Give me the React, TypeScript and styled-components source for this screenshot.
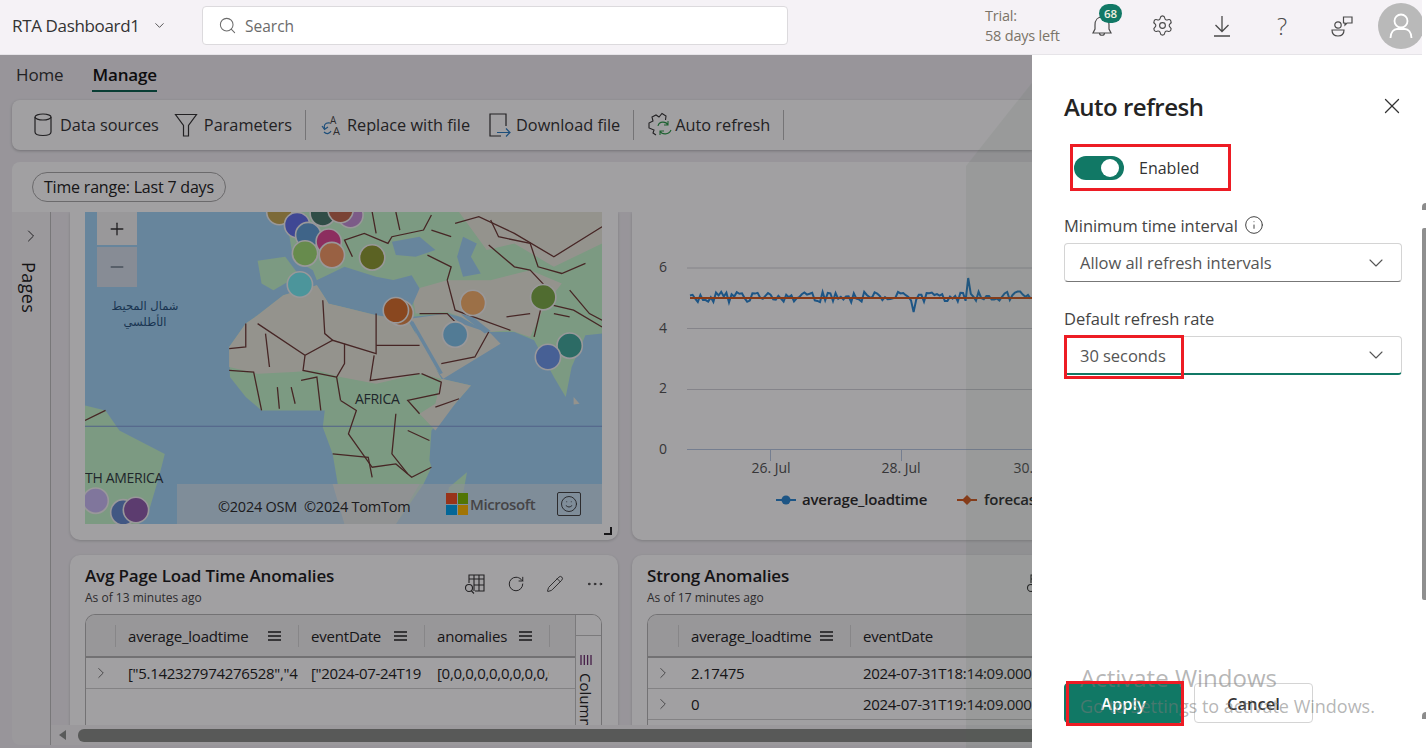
import React from 'react';
import styled, { createGlobalStyle } from 'styled-components';
import { ChevronDown, ChevronRight, Info, Minus, MoreHorizontal, Pencil, Plus, RotateCw, Search, Settings, Smile, X } from 'lucide-react';

const GlobalStyle = createGlobalStyle`
  html, body {
    margin: 0;
    padding: 0;
    background: #fff;
    overflow: hidden;
    font-family: "Open Sans", "Noto Sans", sans-serif;
    color: #242424;
  }
  * { box-sizing: border-box; }
`;

const Screen = styled.div`
  position: relative;
  width: 1426px;
  height: 748px;
  display: flex;
  overflow: hidden;
  background: #fff;
`;

const Window = styled.div`
  width: 1422px;
  height: 748px;
  display: flex;
  flex-direction: column;
`;

const PageScrollbar = styled.div`
  width: 4px;
  display: flex;
  flex-direction: column;
  align-items: stretch;
  padding-top: 203px;
`;

const ScrollArrow = styled.div`
  height: 7px;
  background: #8c8c8c;
  border-radius: 4px 0 0 0;
`;

const ScrollThumb = styled.div`
  height: 372px;
  margin: 18px 0 112px;
  background: #8f8f8f;
  border-radius: 2px 0 0 2px;
`;

const TopBar = styled.header`
  height: 55px;
  flex: none;
  display: flex;
  align-items: center;
  overflow: hidden;
  background: #f5f2f6;
  border-bottom: 1px solid #e6e4e8;
  padding: 0 0 3px 12px;
`;

const AppName = styled.div`
  flex: none;
  display: flex;
  align-items: center;
  width: 190px;
  gap: 12px;
  font-size: 17px;
  letter-spacing: -0.35px;
  color: #333;
`;

const SearchBox = styled.div`
  flex: none;
  width: 586px;
  height: 39px;
  display: flex;
  align-items: center;
  gap: 8px;
  padding-left: 15px;
  background: #fff;
  border: 1px solid #dcdadd;
  border-radius: 4px;
  font-size: 15.5px;
  color: #6b6b6b;
`;

const Trial = styled.div`
  flex: none;
  margin-left: 197px;
  width: 87px;
  font-size: 14.5px;
  line-height: 20px;
  letter-spacing: -0.2px;
  color: #7b7468;
  white-space: nowrap;
`;

const TopIcons = styled.div`
  flex: none;
  display: flex;
  align-items: center;
`;

const TopIcon = styled.div`
  position: relative;
  width: 60px;
  height: 40px;
  display: flex;
  align-items: center;
  justify-content: center;
  color: #4a4a4a;
  font-size: 24px;
  font-weight: 300;
`;

const Badge = styled.span`
  position: absolute;
  top: -2px;
  left: 27px;
  width: 23px;
  height: 19px;
  border-radius: 10px;
  background: #117865;
  color: #f0f0e0;
  font-size: 11.5px;
  font-weight: 600;
  line-height: 19px;
  text-align: center;
`;

const Avatar = styled.div`
  width: 46px;
  height: 46px;
  flex: none;
  margin-left: 6px;
  border-radius: 50%;
  background: #b9b9b9;
  display: flex;
  align-items: center;
  justify-content: center;
  color: #fff;
`;

const Main = styled.div`
  flex: 1;
  min-height: 0;
  display: flex;
`;

const Workspace = styled.div`
  position: relative;
  width: 1032px;
  display: flex;
  flex-direction: column;
  overflow: hidden;
  background: #f0eef2;
`;

const Scrim = styled.div`
  position: absolute;
  inset: 0;
  background: rgba(8, 6, 10, 0.38);
`;

const Band = styled.div`
  position: absolute;
  top: 0;
  right: 0;
  bottom: 0;
  width: 66px;
  background: rgba(130, 170, 130, 0.1);
  clip-path: polygon(100% 4%, 100% 100%, 0 100%, 0 16%);
`;

const Tabs = styled.nav`
  height: 45px;
  flex: none;
  display: flex;
  gap: 29px;
  padding-left: 16px;
`;

const Tab = styled.div<{ $active?: boolean }>`
  height: 37px;
  display: flex;
  align-items: center;
  padding-top: 4px;
  font-size: 17px;
  letter-spacing: -0.15px;
  font-weight: ${p => (p.$active ? 600 : 400)};
  color: ${p => (p.$active ? '#111' : '#333')};
  border-bottom: ${p => (p.$active ? '2px solid #0b5f4e' : '2px solid transparent')};
`;

const Toolbar = styled.div`
  height: 50px;
  flex: none;
  margin-left: 12px;
  display: flex;
  align-items: center;
  padding-left: 21px;
  background: #fff;
  border-radius: 8px 0 0 8px;
  box-shadow: 0 1px 3px rgba(0, 0, 0, 0.25);
`;

const ToolButton = styled.div<{ $gap?: number; $end?: number }>`
  flex: none;
  display: flex;
  align-items: center;
  gap: ${p => p.$gap ?? 7}px;
  margin-right: ${p => p.$end ?? 15}px;
  font-size: 16.3px;
  color: #333;
  white-space: nowrap;
`;

const ToolDivider = styled.div`
  flex: none;
  width: 1px;
  height: 30px;
  margin-right: 13px;
  background: #b8b8b8;
`;

const FilterBar = styled.div`
  height: 50px;
  flex: none;
  margin: 12px 0 0 12px;
  display: flex;
  align-items: center;
  padding-left: 20px;
  background: #fff;
  border-radius: 8px 0 0 0;
`;

const Pill = styled.div`
  height: 30px;
  padding: 0 11px;
  display: flex;
  align-items: center;
  border: 1px solid #a8a8a8;
  border-radius: 15px;
  font-size: 16px;
  letter-spacing: -0.2px;
  color: #222;
`;

const Body = styled.div`
  flex: 1;
  min-height: 0;
  display: flex;
  margin: 0 0 3px 12px;
`;

const PagesPane = styled.aside`
  width: 39px;
  flex: none;
  display: flex;
  flex-direction: column;
  align-items: center;
  padding-top: 14px;
  gap: 16px;
  background: #f5f4f6;
  border-right: 1px solid #bdbdbd;
  border-radius: 0 0 0 8px;
  color: #333;
`;

const PagesLabel = styled.div`
  writing-mode: vertical-rl;
  font-size: 18px;
  font-weight: 500;
  letter-spacing: 0.4px;
  color: #1c1c1c;
  margin-left: -4px;
`;

const ScrollColumn = styled.div`
  flex: 1;
  min-width: 0;
  display: flex;
  flex-direction: column;
`;

const Scroller = styled.div`
  flex: 1;
  min-height: 0;
  overflow: hidden;
  padding-left: 19px;
`;

const CardGrid = styled.div`
  display: grid;
  grid-template-columns: 548px 548px;
  grid-template-rows: 328px 220px;
  column-gap: 14px;
  row-gap: 15px;
`;

const Card = styled.section`
  position: relative;
  background: #fff;
  border-radius: 0 0 10px 10px;
  box-shadow: 0 1px 3px rgba(0, 0, 0, 0.18);
`;

const TableCard = styled(Card)`
  border-radius: 10px;
  padding: 11px 15px 0;
`;

const MapFrame = styled.div`
  position: relative;
  width: 517px;
  height: 312px;
  margin-left: 15px;
  overflow: hidden;
`;

const ZoomControl = styled.div`
  position: absolute;
  top: 0;
  left: 12px;
  width: 40px;
  display: flex;
  flex-direction: column;
  gap: 2px;
`;

const ZoomButton = styled.div<{ $off?: boolean }>`
  height: ${p => (p.$off ? 40 : 33)}px;
  display: flex;
  align-items: center;
  justify-content: center;
  background: ${p => (p.$off ? '#d5dfeb' : '#f2f2f2')};
  color: ${p => (p.$off ? '#6f7f8c' : '#333')};
`;

const Attribution = styled.div`
  position: absolute;
  left: 92px;
  right: 0;
  bottom: 0;
  height: 40px;
  display: flex;
  align-items: center;
  padding-left: 41px;
  background: rgba(225, 232, 238, 0.62);
  color: #2b2b2b;
  font-size: 14.5px;
  letter-spacing: -0.25px;
`;

const Copyright = styled.span`
  width: 228px;
  padding-top: 4px;
  white-space: nowrap;
`;

const MsLogo = styled.div`
  width: 22px;
  height: 22px;
  display: grid;
  grid-template-columns: 1fr 1fr;
  gap: 1px;
  margin-right: 2px;
`;

const MsSquare = styled.i<{ $color: string }>`
  display: block;
  background: ${p => p.$color};
`;

const MsName = styled.span`
  font-size: 15px;
  font-weight: 600;
  color: #6c6c6c;
  letter-spacing: -0.4px;
`;

const FeedbackBox = styled.div`
  width: 24px;
  height: 24px;
  margin-left: 22px;
  display: flex;
  align-items: center;
  justify-content: center;
  border: 1px solid #444;
  border-radius: 2px;
  color: #333;
`;

const ResizeCorner = styled.div`
  position: absolute;
  right: 6px;
  bottom: 5px;
  width: 8px;
  height: 8px;
  border-right: 2px solid #222;
  border-bottom: 2px solid #222;
`;

const CardHeader = styled.div`
  display: flex;
  justify-content: space-between;
  height: 48px;
`;

const CardTitle = styled.h3`
  margin: 0;
  font-size: 17px;
  line-height: 20px;
  font-weight: 600;
  letter-spacing: -0.15px;
  color: #1c1c1c;
  white-space: nowrap;
`;

const CardSubtitle = styled.div`
  margin-top: 3px;
  font-size: 12px;
  color: #444;
`;

const CardActions = styled.div`
  display: flex;
  align-items: center;
  gap: 21px;
  height: 28px;
  margin: 4px -2px 0 0;
  color: #333;
`;

const Table = styled.div`
  position: relative;
  width: 517px;
  height: 140px;
  overflow: hidden;
  border: 1px solid #b5b5b5;
  border-bottom: none;
  border-radius: 10px 10px 0 0;
`;

const HeadRow = styled.div<{ $cols: string }>`
  display: grid;
  grid-template-columns: ${p => p.$cols};
  height: 43px;
  align-items: center;
  background: #f1f1f1;
  border-bottom: 2px solid #b4b4b4;
`;

const HeadCell = styled.div`
  min-width: 0;
  display: flex;
  align-items: center;
  justify-content: space-between;
  height: 22px;
  padding: 0 17px 0 12px;
  border-left: 1px solid #d6d6d6;
  font-size: 15px;
  font-weight: 500;
  letter-spacing: -0.2px;
  color: #222;
  overflow: hidden;
  white-space: nowrap;
`;

const BodyRow = styled.div<{ $cols: string }>`
  display: grid;
  grid-template-columns: ${p => p.$cols};
  height: 31px;
  align-items: center;
  border-bottom: 1px solid #cfcfcf;
  color: #222;
`;

const BodyCell = styled.div`
  min-width: 0;
  padding-left: 13px;
  font-size: 15px;
  letter-spacing: -0.3px;
  overflow: hidden;
  white-space: nowrap;
`;

const Expander = styled.div`
  display: flex;
  justify-content: center;
  color: #555;
`;

const ColumnsRail = styled.div`
  position: absolute;
  top: 0;
  right: 0;
  bottom: 0;
  width: 26px;
  background: #fff;
  border-left: 1px solid #c2c2c2;
`;

const RailTop = styled.div`
  height: 21px;
  border-bottom: 1px solid #c2c2c2;
`;

const RailLabel = styled.div`
  display: flex;
  flex-direction: row;
  align-items: center;
  gap: 7px;
  padding: 18px 3px 0 0;
  writing-mode: vertical-rl;
  font-size: 15px;
  font-weight: 500;
  color: #222;
`;

const HScrollbar = styled.div`
  height: 20px;
  flex: none;
  display: flex;
  align-items: center;
  padding-left: 8px;
  gap: 12px;
  background: #f5f4f6;
`;

const LeftArrow = styled.div`
  width: 0;
  height: 0;
  border-top: 5px solid transparent;
  border-bottom: 5px solid transparent;
  border-right: 7px solid #8c8f8c;
`;

const HThumb = styled.div`
  flex: 1;
  height: 13px;
  background: #8a8d88;
  border-radius: 6px 0 0 6px;
`;

const Panel = styled.aside`
  width: 390px;
  flex: none;
  display: flex;
  flex-direction: column;
  padding: 0 20px 25px 32px;
  background: #fff;
`;

const PanelHeader = styled.div`
  display: flex;
  align-items: center;
  justify-content: space-between;
  height: 30px;
  margin: 36px -3px 0 0;
  color: #333;
`;

const PanelTitle = styled.h2`
  margin: 0;
  font-size: 24px;
  font-weight: 600;
  letter-spacing: -0.5px;
  color: #242424;
`;

const ToggleRow = styled.div`
  display: flex;
  align-items: center;
  gap: 15px;
  margin: 35px 0 0 10px;
  font-size: 16px;
  color: #333;
`;

const Toggle = styled.div`
  width: 50px;
  height: 24px;
  display: flex;
  justify-content: flex-end;
  align-items: center;
  padding-right: 5px;
  background: #117865;
  border-radius: 12px;
`;

const Knob = styled.div`
  width: 18px;
  height: 18px;
  border-radius: 50%;
  background: #fff;
`;

const FieldLabel = styled.label<{ $top: number }>`
  display: flex;
  align-items: center;
  gap: 6px;
  height: 20px;
  margin-top: ${p => p.$top}px;
  font-size: 16.5px;
  letter-spacing: -0.05px;
  color: #444;
`;

const Select = styled.div<{ $focused?: boolean }>`
  height: 39px;
  margin-top: 8px;
  display: flex;
  align-items: center;
  justify-content: space-between;
  padding: 0 13px 0 15px;
  border: 1px solid #d4d4d4;
  border-bottom: ${p => (p.$focused ? '2px solid #117865' : '1.5px solid #777')};
  border-radius: 4px;
  font-size: 16.5px;
  letter-spacing: -0.05px;
  color: #555;
`;

const PanelFooter = styled.div`
  margin-top: auto;
  display: flex;
  gap: 11px;
`;

const Button = styled.div<{ $primary?: boolean }>`
  width: 119px;
  height: 40px;
  display: flex;
  align-items: center;
  justify-content: center;
  border-radius: 4px;
  font-size: 16.5px;
  font-weight: 600;
  background: ${p => (p.$primary ? '#117865' : '#fff')};
  color: ${p => (p.$primary ? '#fff' : '#333')};
  border: 1px solid ${p => (p.$primary ? '#117865' : '#d4d4d4')};
`;

const RedBox = styled.div<{ $x: number; $y: number; $w: number; $h: number }>`
  position: absolute;
  left: ${p => p.$x}px;
  top: ${p => p.$y}px;
  width: ${p => p.$w}px;
  height: ${p => p.$h}px;
  border: 3px solid #ed1c24;
`;

const Watermark = styled.div`
  position: absolute;
  left: 1080px;
  top: 661px;
  color: rgba(120, 120, 120, 0.55);
  font-size: 18px;
  line-height: 25px;
  white-space: nowrap;
`;

const WatermarkTitle = styled.div`
  font-size: 24px;
  line-height: 33px;
`;

// map drawn in a 1309x934 grid, squeezed into the 517x312 frame
const land = {
  green: [
    'M720 36 L1522 36 L1522 400 L1480 405 L1445 500 L1430 590 L1400 530 L1350 420 L1300 395 L1230 395 L1165 350 L1130 340 L1035 350 L1040 250 L950 230 L870 200 L800 240 L790 210 L740 175 Z',
    'M650 182 L720 170 L755 225 L690 270 L660 250 Z',
    'M578 440 L620 370 L650 345 L715 285 L800 255 L830 310 L950 345 L1030 360 L1075 450 L1115 535 L1190 555 L1150 610 L1090 690 L1085 780 L1090 800 L1070 850 L1000 970 L870 970 L840 760 L815 680 L820 630 L660 630 L620 590 L580 530 Z',
    'M213 615 L265 630 L300 690 L415 760 L400 830 L375 930 L350 970 L213 970 Z',
    'M1180 815 L1135 860 L1130 880 L1170 880 Z',
  ],
  sand: [
    'M578 440 L620 370 L650 345 L715 285 L800 255 L830 310 L950 345 L1030 360 L1075 450 L1115 535 L1060 520 L950 550 L860 530 L800 510 L740 515 L650 520 L578 500 Z',
    'M1040 355 L1130 340 L1165 370 L1240 400 L1265 430 L1120 535 L1060 440 Z',
    'M1115 535 L1190 555 L1150 610 L1100 690 L1060 640 L1100 610 Z',
    'M1040 270 L1130 240 L1240 240 L1340 210 L1420 250 L1380 310 L1340 410 L1290 390 L1230 395 L1165 350 L1130 335 L1050 340 Z',
    'M1160 36 L1522 36 L1522 130 L1400 200 L1300 130 L1230 150 Z',
    'M840 850 L1060 850 L1000 970 L870 970 Z',
    'M1450 590 L1465 610 L1450 612 Z',
  ],
  water: [
    'M800 240 L870 205 L960 250 L1040 225 L1060 265 L1030 345 L950 340 L830 310 Z',
    'M990 125 L1060 110 L1100 150 L1050 170 L1000 165 Z',
    'M1170 110 L1205 130 L1190 170 L1215 220 L1170 230 L1155 170 Z',
    'M1165 342 L1190 345 L1240 392 L1225 400 Z',
  ],
  borders: [
    'M620 370 L620 440 L578 445',
    'M650 370 L770 465 L840 420 L950 460 L950 340',
    'M815 300 L820 400 L840 420',
    'M670 400 L680 500',
    'M770 465 L765 510 L850 530',
    'M870 430 L870 490 L850 530 L860 600',
    'M945 465 L935 540 L1060 520',
    'M950 435 L1060 435',
    'M1065 520 L1115 545 L1110 580 L1030 600 L1060 640',
    'M578 510 L640 515 L660 630 M700 560 L705 625 M735 560 L745 610 M760 540 L800 530 L810 630',
    'M860 600 L900 630 L880 700 L940 800 L1000 790 L1040 830 L1090 800',
    'M1000 640 L990 760 L1030 820',
    'M1030 690 L1085 720',
    'M1100 620 L1160 595',
    'M1060 340 L1130 340 L1150 365',
    'M1115 490 L1200 470 L1235 395',
    'M1130 240 L1150 330 L1290 390',
    'M1235 135 L1300 200 L1340 210 L1380 260 L1350 410',
    'M1080 165 L1140 200 L1130 240',
    'M1280 350 L1340 340',
    'M1380 310 L1450 330 L1522 380',
    'M1090 45 L1070 90 L990 110 L980 130 L920 100 L870 120 L890 170',
    'M1150 70 L1210 50 L1300 100 L1400 170 L1522 80',
    'M1240 60 L1260 110 L1340 130 L1360 200 L1420 220 L1480 190',
    'M1000 36 L1010 90 M940 36 L950 100 M1090 90 L1140 110',
    'M1440 270 L1490 340 L1522 360 M1400 340 L1440 350',
    'M213 660 L265 630',
    'M840 760 L930 770 L940 830',
  ],
};

const pins: [number, number, string][] = [
  [705, 36, '#c4a855'],
  [750, 75, '#6270e8'],
  [815, 40, '#4a7a6c'],
  [885, 45, '#c490d6'],
  [860, 30, '#c06a50'],
  [778, 105, '#629fd6'],
  [830, 125, '#de4894'],
  [770, 160, '#a2dd76'],
  [838, 165, '#f29a66'],
  [940, 172, '#8f9c32'],
  [757, 253, '#76edf4'],
  [1012, 338, '#e0894a'],
  [1000, 330, '#d8702c'],
  [1195, 308, '#f7b26d'],
  [1150, 403, '#80c4ea'],
  [1373, 291, '#7dac48'],
  [1440, 436, '#43aa9d'],
  [1385, 470, '#6f98eb'],
  [240, 900, '#cabcf5'],
  [310, 935, '#6589ce'],
  [342, 928, '#905ead'],
];

const WorldMap = () => (
  <svg width="517" height="312" viewBox="0 0 517 312">
    <rect width="517" height="312" fill="#a2d4f6" />
    <g transform="scale(0.395 0.3341) translate(-213 -36)">
      {land.green.map(d => <path key={d} d={d} fill="#c4f5cb" />)}
      {land.sand.map(d => <path key={d} d={d} fill="#ebeade" />)}
      {land.water.map(d => <path key={d} d={d} fill="#a2d4f6" />)}
      <path d="M1040 365 L1115 520" stroke="#a2d4f6" strokeWidth="9" fill="none" />
      <path d="M213 677 L1522 677" stroke="#7c9ad4" strokeWidth="3" fill="none" />
      {land.borders.map(d => (
        <path key={d} d={d} stroke="#6d3b36" strokeWidth="1.3" vectorEffect="non-scaling-stroke" fill="none" />
      ))}
      {pins.map(([cx, cy, color]) => (
        <ellipse key={cx + '-' + cy} cx={cx} cy={cy} rx="32" ry="38" fill={color} stroke="#f2f2f2" strokeWidth="1.6" vectorEffect="non-scaling-stroke" />
      ))}
    </g>
    <g fontFamily="'Open Sans', sans-serif" fontSize="14" fill="#2f3a3f" letterSpacing="-0.3">
      <text x="270" y="192">AFRICA</text>
      <text x="0" y="271">TH AMERICA</text>
      <text x="60" y="98" fill="#24517c" textAnchor="middle" fontSize="11.5" fontFamily="'DejaVu Sans', sans-serif">شمال المحيط</text>
      <text x="60" y="114" fill="#24517c" textAnchor="middle" fontSize="11.5" fontFamily="'DejaVu Sans', sans-serif">الأطلسي</text>
    </g>
  </svg>
);

// noisy average_loadtime series around 5, with the two visible spikes
const buildSeries = () => {
  const pts: string[] = [];
  let seed = 17;
  for (let x = 690; x <= 1032; x += 2.6) {
    seed = (seed * 137 + 59) % 1009;
    const noise = (seed / 1009 - 0.5) * 11;
    let y = 297 + noise;
    if (Math.abs(x - 914) < 1.4) y = 312;
    if (Math.abs(x - 968) < 1.4) y = 278;
    pts.push(x.toFixed(1) + ',' + y.toFixed(1));
  }
  return pts.join(' ');
};

const series = buildSeries();

const LoadTimeChart = () => (
  <svg width="548" height="328" viewBox="632 212 548 328">
    <g stroke="#d2d2d8" strokeWidth="1">
      <path d="M687 268 H1180 M687 328.5 H1180 M687 389.5 H1180" />
      <path d="M687 449.5 H1180 M770.5 450 V461 M901.5 450 V461 M1032.5 450 V461" stroke="#b9c8e2" />
    </g>
    <g fontFamily="'Open Sans', sans-serif" fontSize="14" fill="#555" textAnchor="middle">
      <text x="663" y="272">6</text>
      <text x="663" y="333">4</text>
      <text x="663" y="393">2</text>
      <text x="663" y="454">0</text>
      <text x="771" y="473">26. Jul</text>
      <text x="901" y="473">28. Jul</text>
      <text x="1033" y="473">30. Jul</text>
    </g>
    <polyline points={series} fill="none" stroke="#2a86d0" strokeWidth="2" />
    <path d="M690 298 H1032" stroke="#d9591c" strokeWidth="2" />
    <path d="M776 500 H796" stroke="#2a86d0" strokeWidth="2" />
    <circle cx="786" cy="500" r="4.5" fill="#2a86d0" />
    <path d="M957 500 H977" stroke="#d9591c" strokeWidth="2" />
    <path d="M967 495 L972 500 L967 505 L962 500 Z" fill="#d9591c" />
    <g fontFamily="'Open Sans', sans-serif" fontSize="15" fontWeight="600" fill="#2c2c2c" letterSpacing="-0.2">
      <text x="802" y="505">average_loadtime</text>
      <text x="984" y="505">forecast</text>
    </g>
  </svg>
);

const Ic = styled.svg.attrs({ fill: 'none', stroke: 'currentColor' })`
  flex: none;
`;

const DatabaseIcon = () => (
  <Ic width="20" height="24" viewBox="0 0 20 24" strokeWidth="1.2">
    <ellipse cx="10" cy="4" rx="8" ry="3" />
    <path d="M2 4 V19 C2 21 5 22.5 10 22.5 C15 22.5 18 21 18 19 V4" />
  </Ic>
);

const FunnelIcon = () => (
  <Ic width="24" height="24" viewBox="0 0 24 24" strokeWidth="1.2">
    <path d="M1.5 1.5 H22.5 L14.5 12.5 V23 H9.5 V12.5 Z" />
  </Ic>
);

const ReplaceIcon = () => (
  <Ic width="24" height="24" viewBox="0 0 24 24" strokeWidth="1.2">
    <path d="M11 10 C6 9 4 13 6 16" stroke="#2b7cc0" />
    <path d="M3 13 L5.5 16.5 L9 14" stroke="#2b7cc0" />
    <path d="M5 19 C8 22 11 20 12 18" stroke="#2b7cc0" />
    <text x="11" y="11" fontSize="10" stroke="none" fill="#444" fontFamily="'Open Sans', sans-serif">A</text>
    <text x="14" y="22" fontSize="11" stroke="none" fill="#444" fontFamily="'Open Sans', sans-serif">A</text>
  </Ic>
);

const DownloadFileIcon = () => (
  <Ic width="24" height="24" viewBox="0 0 24 24" strokeWidth="1.2">
    <path d="M13 23 H2 V1 H18 V13" />
    <path d="M9 19.5 H22 M18 15.5 L22 19.5 L18 23.5" stroke="#2b7cc0" />
  </Ic>
);

const AutoRefreshIcon = () => (
  <Ic width="26" height="26" viewBox="0 0 26 26" strokeWidth="1.1">
    <path d="M9 23 L6 21 L7 18 L2 16 V11 L6 9 L5 5 L9 3 L12 5 L15 1.5 L19 4 L18.5 8" />
    <path d="M11 14 C12 9 19 9 21 13 M21 9 V13 H17" stroke="#2e9a4a" />
    <path d="M24 18 C22 23 15 23 13 19 M13 23 V19 H17" stroke="#2e9a4a" />
  </Ic>
);

const BellIcon = () => (
  <Ic width="24" height="24" viewBox="0 0 24 24" strokeWidth="1.2">
    <path d="M5 11 C5 6 8 3 12 3 C16 3 19 6 19 11 V15 L21 19 H3 L5 15 Z" />
    <path d="M9.5 19 C9.5 22 14.5 22 14.5 19" />
  </Ic>
);

const DownloadIcon = () => (
  <Ic width="22" height="24" viewBox="0 0 22 24" strokeWidth="1.3">
    <path d="M11 2 V17 M4.5 11 L11 17.5 L17.5 11 M3 22 H19" />
  </Ic>
);

const PeopleIcon = () => (
  <Ic width="24" height="24" viewBox="0 0 24 24" strokeWidth="1.2">
    <circle cx="8" cy="11" r="3.2" />
    <path d="M2 16 H14 C14 20 12 22 8 22 C4 22 2 20 2 16 Z" />
    <path d="M13.5 3 H22 V9 H17 L15 11 V9 H13.5 Z" />
  </Ic>
);

const PersonIcon = () => (
  <Ic width="26" height="28" viewBox="0 0 26 28" strokeWidth="1.8">
    <circle cx="13" cy="9" r="6.5" />
    <path d="M2.5 26 C2.5 20 6 17 9 17 H17 C20 17 23.5 20 23.5 26" />
  </Ic>
);

const MenuLines = () => (
  <Ic width="13" height="12" viewBox="0 0 13 12" strokeWidth="1.5">
    <path d="M0 2 H13 M0 6 H13 M0 10 H13" />
  </Ic>
);

const TableSearchIcon = () => (
  <Ic width="22" height="22" viewBox="0 0 22 22" strokeWidth="1.1">
    <path d="M5 10 V2 H20 V18 H11 M5 6 H20 M10 2 V18 M15 2 V18 M10 12 H20" />
    <circle cx="5" cy="15" r="3.5" />
    <path d="M7.5 18 L10 20.5" />
  </Ic>
);

const RailIcon = () => (
  <Ic width="12" height="12" viewBox="0 0 12 12" strokeWidth="1.3">
    <path d="M1 1 V11 M4.3 1 V11 M7.6 1 V11 M11 1 V11" stroke="#6b2d6e" />
  </Ic>
);

const leftCols = '29px 183px 126px 125px 53px';
const rightCols = '30px 172px 300px';

const Actions = () => (
  <CardActions>
    <TableSearchIcon />
    <RotateCw size={18} strokeWidth={1.3} />
    <Pencil size={18} strokeWidth={1.2} />
    <MoreHorizontal size={20} strokeWidth={1.2} />
  </CardActions>
);

const App = () => (
  <>
    <GlobalStyle />
    <Screen>
      <Window>
        <TopBar>
          <AppName>
            RTA Dashboard1
            <ChevronDown size={15} strokeWidth={1.3} />
          </AppName>
          <SearchBox>
            <Search size={19} strokeWidth={1.3} />
            Search
          </SearchBox>
          <Trial>
            Trial:
            <br />
            58 days left
          </Trial>
          <TopIcons>
            <TopIcon>
              <BellIcon />
              <Badge>68</Badge>
            </TopIcon>
            <TopIcon>
              <Settings size={23} strokeWidth={1.2} />
            </TopIcon>
            <TopIcon>
              <DownloadIcon />
            </TopIcon>
            <TopIcon>?</TopIcon>
            <TopIcon>
              <PeopleIcon />
            </TopIcon>
            <Avatar>
              <PersonIcon />
            </Avatar>
          </TopIcons>
        </TopBar>
        <Main>
          <Workspace>
            <Tabs>
              <Tab>Home</Tab>
              <Tab $active>Manage</Tab>
            </Tabs>
            <Toolbar>
              <ToolButton>
                <DatabaseIcon />
                Data sources
              </ToolButton>
              <ToolButton $gap={6} $end={13}>
                <FunnelIcon />
                Parameters
              </ToolButton>
              <ToolDivider />
              <ToolButton $gap={4} $end={18}>
                <ReplaceIcon />
                Replace with file
              </ToolButton>
              <ToolButton $gap={4} $end={13}>
                <DownloadFileIcon />
                Download file
              </ToolButton>
              <ToolDivider />
              <ToolButton $gap={2} $end={13}>
                <AutoRefreshIcon />
                Auto refresh
              </ToolButton>
              <ToolDivider />
            </Toolbar>
            <FilterBar>
              <Pill>Time range: Last 7 days</Pill>
            </FilterBar>
            <Body>
              <PagesPane>
                <ChevronRight size={20} strokeWidth={1.2} />
                <PagesLabel>Pages</PagesLabel>
              </PagesPane>
              <ScrollColumn>
                <Scroller>
                  <CardGrid>
                    <Card>
                      <MapFrame>
                        <WorldMap />
                        <ZoomControl>
                          <ZoomButton>
                            <Plus size={20} strokeWidth={1.6} />
                          </ZoomButton>
                          <ZoomButton $off>
                            <Minus size={20} strokeWidth={1.6} />
                          </ZoomButton>
                        </ZoomControl>
                        <Attribution>
                          <Copyright>©2024 OSM&nbsp; ©2024 TomTom</Copyright>
                          <MsLogo>
                            <MsSquare $color="#f25022" />
                            <MsSquare $color="#7fba00" />
                            <MsSquare $color="#00a4ef" />
                            <MsSquare $color="#ffb900" />
                          </MsLogo>
                          <MsName>Microsoft</MsName>
                          <FeedbackBox>
                            <Smile size={18} strokeWidth={1.2} />
                          </FeedbackBox>
                        </Attribution>
                      </MapFrame>
                      <ResizeCorner />
                    </Card>
                    <Card>
                      <LoadTimeChart />
                    </Card>
                    <TableCard>
                      <CardHeader>
                        <div>
                          <CardTitle>Avg Page Load Time Anomalies</CardTitle>
                          <CardSubtitle>As of 13 minutes ago</CardSubtitle>
                        </div>
                        <Actions />
                      </CardHeader>
                      <Table>
                        <HeadRow $cols={leftCols}>
                          <span />
                          <HeadCell>average_loadtime <MenuLines /></HeadCell>
                          <HeadCell>eventDate <MenuLines /></HeadCell>
                          <HeadCell>anomalies <MenuLines /></HeadCell>
                          <HeadCell />
                        </HeadRow>
                        <BodyRow $cols={leftCols}>
                          <Expander><ChevronRight size={18} strokeWidth={1.1} /></Expander>
                          <BodyCell>["5.142327974276528","4.</BodyCell>
                          <BodyCell>["2024-07-24T19</BodyCell>
                          <BodyCell>[0,0,0,0,0,0,0,0,0,0,0,0,</BodyCell>
                        </BodyRow>
                        <ColumnsRail>
                          <RailTop />
                          <RailLabel>
                            <RailIcon />
                            Columns
                          </RailLabel>
                        </ColumnsRail>
                      </Table>
                    </TableCard>
                    <TableCard>
                      <CardHeader>
                        <div>
                          <CardTitle>Strong Anomalies</CardTitle>
                          <CardSubtitle>As of 17 minutes ago</CardSubtitle>
                        </div>
                        <Actions />
                      </CardHeader>
                      <Table>
                        <HeadRow $cols={rightCols}>
                          <span />
                          <HeadCell>average_loadtime <MenuLines /></HeadCell>
                          <HeadCell>eventDate</HeadCell>
                        </HeadRow>
                        <BodyRow $cols={rightCols}>
                          <Expander><ChevronRight size={18} strokeWidth={1.1} /></Expander>
                          <BodyCell>2.17475</BodyCell>
                          <BodyCell>2024-07-31T18:14:09.000Z</BodyCell>
                        </BodyRow>
                        <BodyRow $cols={rightCols}>
                          <Expander><ChevronRight size={18} strokeWidth={1.1} /></Expander>
                          <BodyCell>0</BodyCell>
                          <BodyCell>2024-07-31T19:14:09.000Z</BodyCell>
                        </BodyRow>
                      </Table>
                    </TableCard>
                  </CardGrid>
                </Scroller>
                <HScrollbar>
                  <LeftArrow />
                  <HThumb />
                </HScrollbar>
              </ScrollColumn>
            </Body>
            <Band />
            <Scrim />
          </Workspace>
          <Panel>
            <PanelHeader>
              <PanelTitle>Auto refresh</PanelTitle>
              <X size={26} strokeWidth={1.2} />
            </PanelHeader>
            <ToggleRow>
              <Toggle>
                <Knob />
              </Toggle>
              Enabled
            </ToggleRow>
            <FieldLabel $top={35}>
              Minimum time interval
              <Info size={20} strokeWidth={1.2} />
            </FieldLabel>
            <Select>
              Allow all refresh intervals
              <ChevronDown size={24} strokeWidth={1.1} />
            </Select>
            <FieldLabel $top={26}>Default refresh rate</FieldLabel>
            <Select $focused>
              30 seconds
              <ChevronDown size={24} strokeWidth={1.1} />
            </Select>
            <PanelFooter>
              <Button $primary>Apply</Button>
              <Button>Cancel</Button>
            </PanelFooter>
          </Panel>
        </Main>
      </Window>
      <PageScrollbar>
        <ScrollArrow />
        <ScrollThumb />
        <ScrollArrow />
      </PageScrollbar>
      <Watermark>
        <WatermarkTitle>Activate Windows</WatermarkTitle>
        Go to Settings to activate Windows.
      </Watermark>
      <RedBox $x={1070} $y={144} $w={161} $h={47} />
      <RedBox $x={1064} $y={335} $w={120} $h={44} />
      <RedBox $x={1066} $y={681} $w={118} $h={45} />
    </Screen>
  </>
);

export default App;
